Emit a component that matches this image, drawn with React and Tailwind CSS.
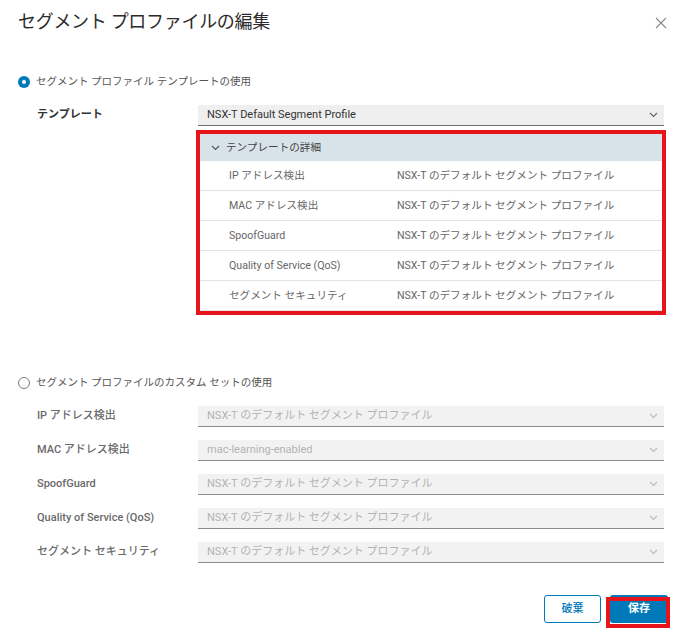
import React from "react";

const FONT = { fontFamily: '"Roboto", "Noto Sans CJK JP", "Noto Sans", sans-serif' };

function Chevron({ color = "#666" }) {
  return (
    <svg width="9" height="6" viewBox="0 0 9 6" fill="none">
      <path d="M1 1 L4.5 4.5 L8 1" stroke={color} strokeWidth="1.2" />
    </svg>
  );
}

function Select({ text, disabled }) {
  return (
    <div
      className={
        "flex items-center justify-between w-[466px] h-[21px] pl-[9px] pr-[6px] text-[11px] border-b " +
        (disabled
          ? "bg-[#f2f2f2] border-[#8c8c8c] text-[#b3b3b3]"
          : "bg-[#efefef] border-[#6e6e6e] text-[#333]")
      }
    >
      <span>{text}</span>
      <Chevron color={disabled ? "#bdbdbd" : "#666"} />
    </div>
  );
}

const details = [
  ["IP アドレス検出", "NSX-T のデフォルト セグメント プロファイル"],
  ["MAC アドレス検出", "NSX-T のデフォルト セグメント プロファイル"],
  ["SpoofGuard", "NSX-T のデフォルト セグメント プロファイル"],
  ["Quality of Service (QoS)", "NSX-T のデフォルト セグメント プロファイル"],
  ["セグメント セキュリティ", "NSX-T のデフォルト セグメント プロファイル"],
];

const custom = [
  ["IP アドレス検出", "NSX-T のデフォルト セグメント プロファイル"],
  ["MAC アドレス検出", "mac-learning-enabled"],
  ["SpoofGuard", "NSX-T のデフォルト セグメント プロファイル"],
  ["Quality of Service (QoS)", "NSX-T のデフォルト セグメント プロファイル"],
  ["セグメント セキュリティ", "NSX-T のデフォルト セグメント プロファイル"],
];

export default function App() {
  return (
    <div className="relative w-[682px] h-[636px] bg-white overflow-hidden" style={FONT}>
      {/* Header */}
      <div className="flex items-center justify-between pt-[10px] pl-[18px] pr-[15px]">
        <h1 className="text-[18px] leading-[24px] text-[#2b2b2b] font-normal tracking-[-0.3px]">
          セグメント プロファイルの編集
        </h1>
        <svg width="12" height="12" viewBox="0 0 12 12" className="mt-[2px]">
          <path d="M1 1 L11 11 M11 1 L1 11" stroke="#8a8a8a" strokeWidth="1.1" />
        </svg>
      </div>

      {/* Radio 1 */}
      <div className="flex items-center mt-[40px] pl-[18px] h-[16px]">
        <div className="w-[12px] h-[12px] rounded-full bg-[#0079b8] flex items-center justify-center">
          <div className="w-[4px] h-[4px] rounded-full bg-white" />
        </div>
        <span className="ml-[6px] text-[10.5px] text-[#565656]">
          セグメント プロファイル テンプレートの使用
        </span>
      </div>

      {/* Template row */}
      <div className="flex items-center mt-[15px] pl-[37px]">
        <div className="w-[161px] text-[11px] font-bold text-[#333]">テンプレート</div>
        <Select text="NSX-T Default Segment Profile" />
      </div>

      {/* Details table with red box */}
      <div className="ml-[196px] mt-[4px] w-[470px] border-[4px] border-[#e8141c]">
        <div className="flex items-center h-[27px] bg-[#d8e3e9] pl-[11px] text-[10.6px] text-[#444]">
          <Chevron color="#555" />
          <span className="ml-[6px]">テンプレートの詳細</span>
        </div>
        {details.map(([k, v], i) => (
          <div
            key={i}
            className="flex items-center h-[30px] border-b border-[#e3e3e3] text-[10.6px] text-[#666]"
          >
            <div className="w-[197px] pl-[29px]">{k}</div>
            <div>{v}</div>
          </div>
        ))}
      </div>

      {/* Radio 2 */}
      <div className="flex items-center mt-[60px] pl-[18px] h-[16px]">
        <div className="w-[12px] h-[12px] rounded-full border border-[#7a7a7a] bg-white" />
        <span className="ml-[6px] text-[10.5px] text-[#565656]">
          セグメント プロファイルのカスタム セットの使用
        </span>
      </div>

      {/* Custom selects */}
      <div className="flex flex-col gap-[13px] mt-[15px] pl-[37px]">
        {custom.map(([k, v], i) => (
          <div key={i} className="flex items-center">
            <div className="w-[161px] text-[11px] font-medium text-[#6a6a6a]">{k}</div>
            <Select text={v} disabled />
          </div>
        ))}
      </div>

      {/* Footer buttons */}
      <div className="flex justify-end gap-[9px] mt-[32px] pr-[14px]">
        <button className="w-[57px] h-[28px] border border-[#0079b8] rounded-[3px] bg-white text-[11px] font-medium text-[#0079b8]">
          破棄
        </button>
        <button className="w-[58px] h-[28px] rounded-[3px] bg-[#0079b8] text-[11px] font-bold text-white">
          保存
        </button>
      </div>

      {/* annotation red box around save */}
      <div className="absolute left-[606px] top-[597px] w-[64px] h-[31px] border-[4px] border-[#e8141c] pointer-events-none" />
    </div>
  );
}
